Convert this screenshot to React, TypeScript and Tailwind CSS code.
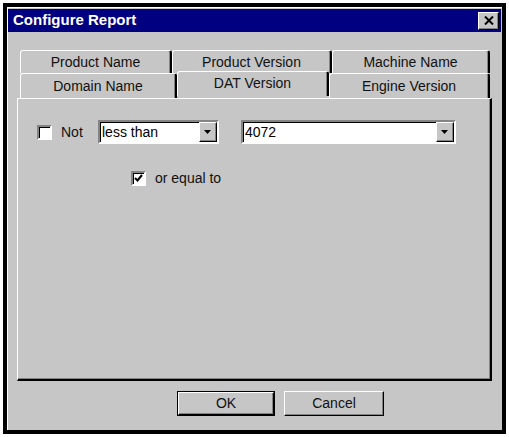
import React from "react";

const raised =
  "border-t border-l border-white border-b border-r border-b-black border-r-black shadow-[inset_-1px_-1px_0_#848484]";
const sunken =
  "border-2 border-t-[#848484] border-l-[#848484] border-b-white border-r-white shadow-[inset_1px_1px_0_#000000]";

const Arrow = () => (
  <div className={`w-[18px] h-full bg-[#c6c6c6] flex items-center justify-center ${raised}`}>
    <svg width="8" height="5" viewBox="0 0 8 5">
      <path d="M0 0 H7 L3.5 4 Z" fill="#000" />
    </svg>
  </div>
);

const Combo = ({ value, className }: { value: string; className: string }) => (
  <div className={`h-[24px] bg-white flex items-stretch ${sunken} ${className}`}>
    <div className="flex-1 pl-[2px] flex items-center text-black">{value}</div>
    <Arrow />
  </div>
);

const Check = ({ checked }: { checked?: boolean }) => (
  <div className={`w-[15px] h-[15px] bg-white flex items-center justify-center ${sunken}`}>
    {checked && (
      <svg width="9" height="9" viewBox="0 0 9 9">
        <path d="M1 4 L3.5 6.5 L8 1" stroke="#000" strokeWidth="2" fill="none" />
      </svg>
    )}
  </div>
);

const tab =
  "h-full flex items-center justify-center border-t border-l border-white border-r-2 border-r-black rounded-t-[3px] shadow-[inset_-1px_0_0_#848484] bg-[#c6c6c6]";

export default function App() {
  return (
    <div className="w-[509px] h-[437px] bg-white p-[3px] font-['Liberation_Sans',Arial,sans-serif] text-[14px] text-[#111111]">
      <div className="h-full border-4 border-black bg-[#c6c6c6] shadow-[inset_1px_1px_0_#ffffff] flex flex-col px-[1px] pt-[2px]">
        <div className="h-[23px] bg-[#000080] flex items-center justify-between pl-[5px] pr-[2px]">
          <span className="text-white font-bold text-[15px]">Configure Report</span>
          <div className={`w-[21px] h-[18px] bg-[#c6c6c6] flex items-center justify-center ${raised}`}>
            <svg width="10" height="9" viewBox="0 0 10 9">
              <path d="M1 0.5 L9 8.5 M9 0.5 L1 8.5" stroke="#000" strokeWidth="2" />
            </svg>
          </div>
        </div>

        <div className="px-[9px] mt-[18px]">
          <div className="flex h-[23px] ml-[3px]">
            <div className={`${tab} w-[152px]`}>Product Name</div>
            <div className={`${tab} w-[160px]`}>Product Version</div>
            <div className={`${tab} w-[158px]`}>Machine Name</div>
          </div>
          <div className="flex h-[25px] ml-[3px]">
            <div className={`${tab} w-[157px]`}>Domain Name</div>
            <div className={`${tab} w-[152px] relative z-10 h-[28px] -mt-[2px] -mb-[1px] pb-[1px]`}>
              DAT Version
            </div>
            <div className={`${tab} w-[161px]`}>Engine Version</div>
          </div>
          <div className="h-[283px] border-t border-l border-white border-r-2 border-b-2 border-r-black border-b-black shadow-[inset_-1px_-1px_0_#848484] pt-[21px] pl-[19px]">
            <div className="flex items-center">
              <Check />
              <span className="ml-[9px] w-[37px]">Not</span>
              <Combo value="less than" className="w-[121px]" />
              <Combo value="4072" className="w-[215px] ml-[22px]" />
            </div>
            <div className="flex items-center mt-[24px] ml-[94px]">
              <Check checked />
              <span className="ml-[9px]">or equal to</span>
            </div>
          </div>
        </div>

        <div className="flex mt-[10px] pl-[169px] gap-[9px]">
          <div className="w-[98px] h-[25px] border border-black flex">
            <div className={`flex-1 flex items-center justify-center ${raised}`}>OK</div>
          </div>
          <div className={`w-[100px] h-[25px] flex items-center justify-center ${raised}`}>Cancel</div>
        </div>
      </div>
    </div>
  );
}
